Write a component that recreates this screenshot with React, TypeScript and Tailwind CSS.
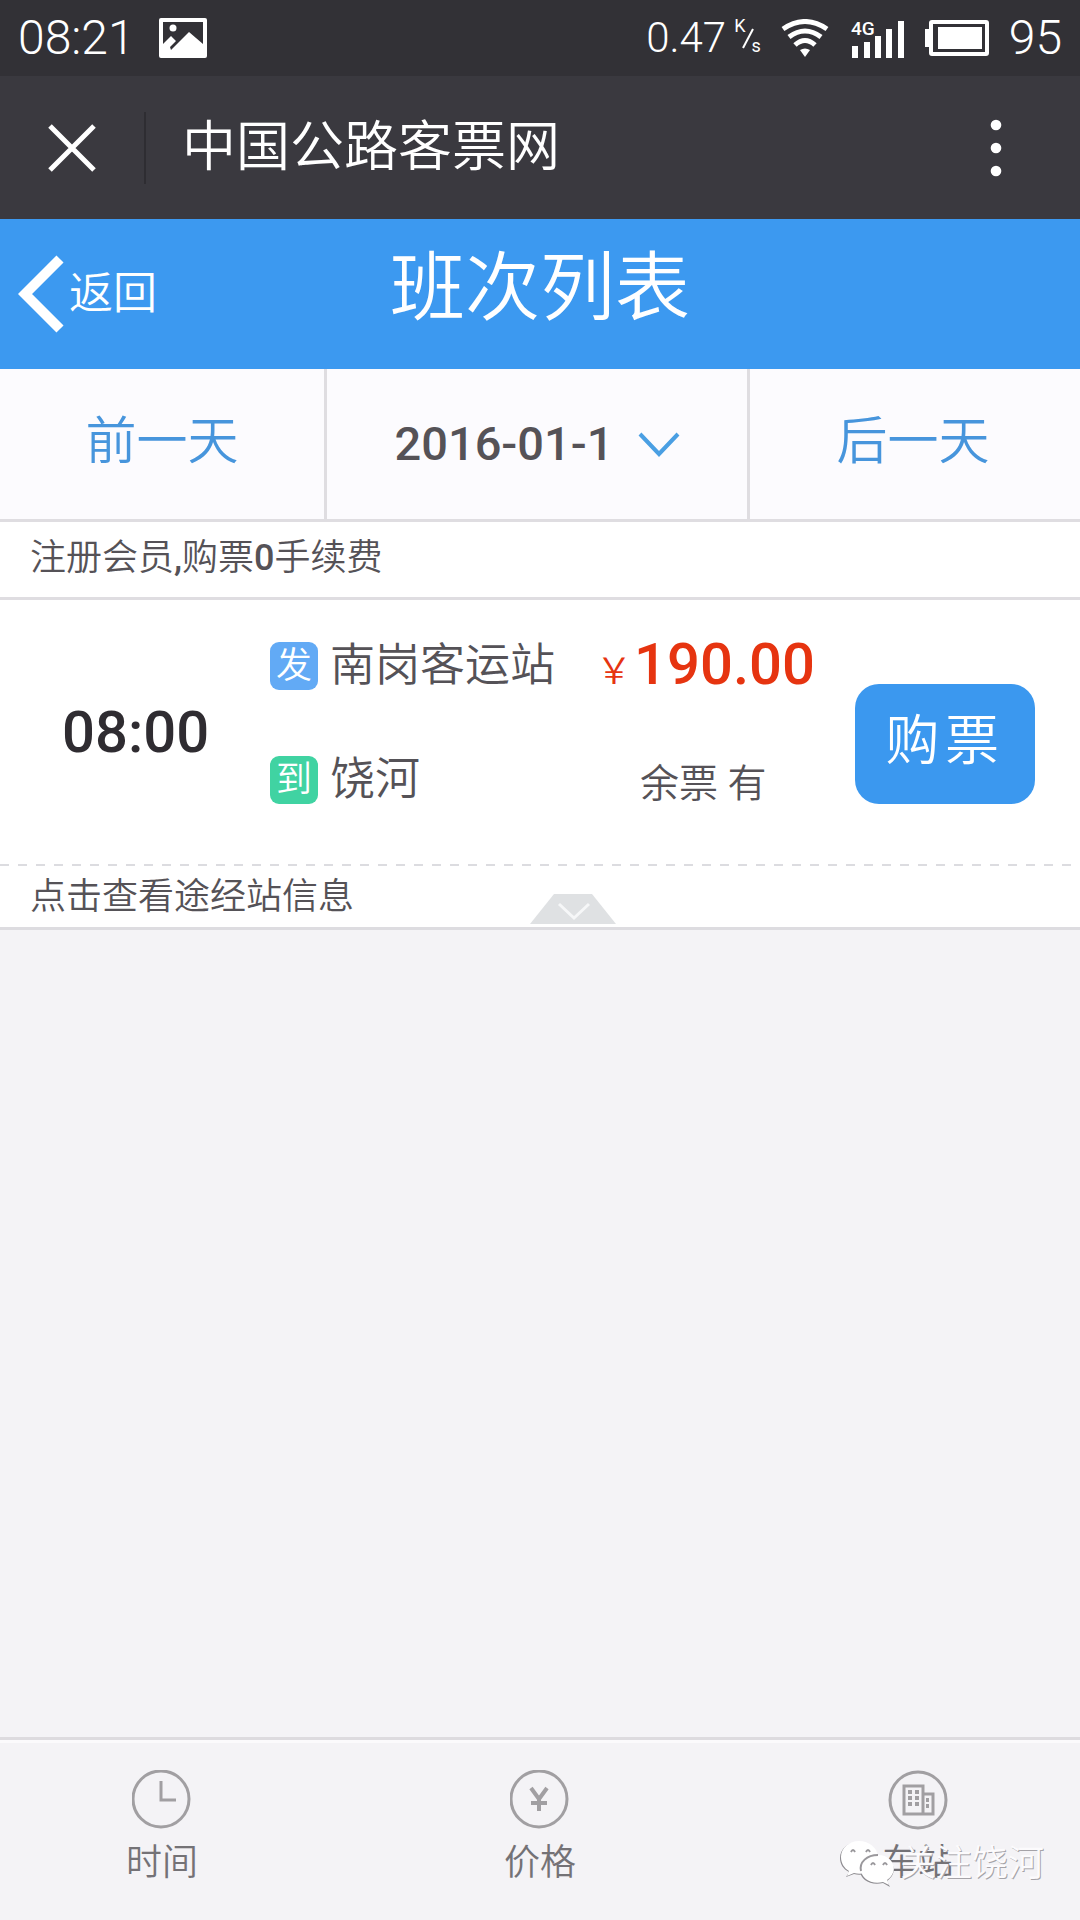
import { useState } from "react";

type ShiftProps = {
  time: string;
  from: string;
  to: string;
  price: string;
  left: string;
};

const dates = ["2016-01-1", "2016-01-2", "2016-01-3"];

const shifts: ShiftProps[] = [
  { time: "08:00", from: "南岗客运站", to: "饶河", price: "190.00", left: "有" },
];

function StatusBar() {
  return (
    <div className="flex h-[76px] items-center justify-between bg-[#323136] px-[18px] font-light text-white">
      <div className="flex items-center gap-6">
        <span className="text-[48px] leading-[60px]">08:21</span>
        <svg width="48" height="40" viewBox="0 0 48 40">
          <path
            fillRule="evenodd"
            fill="#fff"
            d="M2 0H46Q48 0 48 2V38Q48 40 46 40H2Q0 40 0 38V2Q0 0 2 0ZM4 4V26L12 18L17 23L11 29L12 32L30 14L44 26V4Z"
          />
          <circle cx="14" cy="10" r="3.5" fill="#fff" />
        </svg>
      </div>
      <div className="flex items-center">
        <span className="text-[42px] leading-[60px]">0.47</span>
        <span className="ml-2 flex h-[60px] text-[18px] font-normal leading-5">
          <span className="pt-2">K</span>
          <svg className="-mx-1" width="14" height="60" viewBox="0 0 14 60">
            <path d="M2 40L12 21" stroke="#fff" strokeWidth="2" />
          </svg>
          <span className="self-end pb-3">s</span>
        </span>
        <svg className="ml-5" width="48" height="38" viewBox="0 0 48 38">
          <g fill="none" stroke="#fff" strokeWidth="5">
            <path d="M2 10Q24 -5 46 10" />
            <path d="M8 18Q24 6 40 18" />
            <path d="M14 26Q24 17 34 26" />
          </g>
          <path d="M19 31Q24 28 29 31L24 38Z" fill="#fff" />
        </svg>
        <svg className="ml-[22px]" width="54" height="48" viewBox="0 -4 54 48">
          <text x="0" y="17" fill="#fff" fontSize="19" fontWeight="500">
            4G
          </text>
          <path
            fill="#fff"
            d="M1 28h6v12h-6zM13 24h6v16h-6zM24 18h6v22h-6zM35 11h6v29h-6zM47 3h6v37h-6z"
          />
        </svg>
        <svg className="ml-5" width="64" height="36" viewBox="0 0 64 36">
          <path d="M0 9h6v18h-6z" fill="#fff" />
          <rect x="6" y="2" width="56" height="32" rx="1" fill="none" stroke="#fff" strokeWidth="4" />
          <path d="M13 7h44v22h-44z" fill="#fff" />
        </svg>
        <span className="ml-5 text-[48px] leading-[60px]">95</span>
      </div>
    </div>
  );
}

function TitleBar() {
  return (
    <div className="flex h-[143px] items-center bg-[#3a393f] text-white">
      <button type="button" aria-label="关闭" className="flex h-[72px] w-36 items-center justify-center">
        <svg width="48" height="48" viewBox="0 0 48 48">
          <path d="M2 2L46 46M46 2L2 46" stroke="#fff" strokeWidth="5" />
        </svg>
      </button>
      <div className="h-[72px] w-[2px] bg-[#2e2d32]" />
      <span className="ml-9 flex-1 text-[54px] leading-[72px]">中国公路客票网</span>
      <button type="button" aria-label="更多" className="mr-[59px] flex h-[72px] w-[50px] items-center justify-center">
        <svg width="12" height="58" viewBox="0 0 12 58">
          <circle cx="6" cy="6" r="5.3" fill="#fff" />
          <circle cx="6" cy="29" r="5.3" fill="#fff" />
          <circle cx="6" cy="52" r="5.3" fill="#fff" />
        </svg>
      </button>
    </div>
  );
}

function Shift({ time, from, to, price, left }: ShiftProps) {
  return (
    <div className="bg-white">
      <div className="flex h-[264px]">
        <div className="w-[270px] pl-[62px] pt-24 text-[58px] font-medium leading-[72px] text-[#2f2c31]">
          {time}
        </div>
        <div className="flex w-[326px] flex-col gap-[54px] pt-9 text-[45px] leading-[60px] text-[#555257]">
          <div className="flex items-center gap-3">
            <span className="flex size-12 items-center justify-center rounded-[9px] bg-[#62aaf5] text-[36px] leading-12 text-white">
              发
            </span>
            {from}
          </div>
          <div className="flex items-center gap-3">
            <span className="flex size-12 items-center justify-center rounded-[9px] bg-[#40d3a2] text-[36px] leading-12 text-white">
              到
            </span>
            {to}
          </div>
        </div>
        <div className="flex flex-1 flex-col gap-[54px] pt-7">
          <div className="flex items-baseline gap-[2px] text-[#e63410]">
            <span className="text-[36px]">￥</span>
            <span className="text-[58px] font-medium leading-[72px]">{price}</span>
          </div>
          <div className="pl-11 text-[39px] leading-[60px] text-[#555257]">余票 {left}</div>
        </div>
        <button
          type="button"
          className="mr-[45px] mt-[84px] h-[120px] w-[180px] rounded-3xl bg-[#3b98ef] pb-1 text-[54px] leading-[72px] tracking-widest text-white"
        >
          购票
        </button>
      </div>
      <div className="h-[2px] bg-[repeating-linear-gradient(90deg,#dcdce0_0_9px,transparent_9px_18px)]" />
      <button
        type="button"
        className="relative block h-16 w-full border-b-3 border-[#dddce0] pl-[30px] text-left text-[36px] leading-[60px] text-[#555257]"
      >
        点击查看途经站信息
        <svg className="absolute bottom-[3px] left-[530px]" width="86" height="30" viewBox="0 0 86 30">
          <path d="M24 0H62L86 30H0Z" fill="#dfe1e3" />
          <path d="M29 10L44 24L59 10" fill="none" stroke="#f6f7f8" strokeWidth="3" />
        </svg>
      </button>
    </div>
  );
}

function TimeIcon() {
  return (
    <svg width="60" height="60" viewBox="0 0 60 60" fill="none" stroke="#a19fa2" strokeWidth="3">
      <circle cx="29" cy="29" r="28" />
      <path d="M29 11V30H44" />
    </svg>
  );
}

function PriceIcon() {
  return (
    <svg width="60" height="60" viewBox="0 0 60 60" fill="none" stroke="#a19fa2" strokeWidth="3">
      <circle cx="29" cy="29" r="28" />
      <path d="M21 18L29 29L37 18M29 29V41M21 33H37" strokeWidth="4" />
    </svg>
  );
}

function StationIcon() {
  return (
    <svg width="60" height="60" viewBox="0 0 60 60" fill="none" stroke="#a19fa2" strokeWidth="3">
      <circle cx="30" cy="30" r="28" />
      <path d="M16 16H35V44H16ZM35 24H45V44H35Z" />
      <path
        stroke="none"
        fill="#a19fa2"
        d="M20 20h4v4h-4zM27 20h4v4h-4zM20 26h4v4h-4zM27 26h4v4h-4zM20 32h4v4h-4zM27 32h4v4h-4zM38 28h3v4h-3zM38 34h3v4h-3z"
      />
    </svg>
  );
}

const tabs = [
  { label: "时间", icon: <TimeIcon /> },
  { label: "价格", icon: <PriceIcon /> },
  { label: "车站", icon: <StationIcon /> },
];

function Watermark() {
  return (
    <div className="pointer-events-none absolute bottom-8 right-9 flex items-center gap-1">
      <svg width="56" height="48" viewBox="0 0 56 48">
        <g fill="#8d8b90">
          <path d="M18 2C8 2 0 9 0 18C0 24 3 29 9 32L6 37L14 34C25 37 38 30 38 18C38 9 28 2 18 2Z" />
          <path d="M37 16C28 16 20 22 20 30C20 40 31 46 43 43L50 47L47 41C60 32 53 16 37 16Z" />
        </g>
        <path d="M19 1C9 1 1 8 1 17C1 23 4 28 9 31L7 36L14 33C25 36 38 29 38 17C38 8 29 1 19 1Z" fill="#fff" />
        <path d="M38 15C29 15 21 21 21 29C21 39 32 45 43 42L49 45L47 40C60 31 53 15 38 15Z" fill="#fff" />
        <path
          d="M21 31C19 22 27 15 38 15M11 12q2-4 4 0M26 12q2-4 4 0M31 25q2-4 4 0M43 25q2-4 4 0"
          fill="none"
          stroke="#9a989c"
          strokeWidth="2"
        />
      </svg>
      <span className="text-[36px] leading-[48px] text-[#fcfbfd] [text-shadow:1px_1px_0_#a5a3a8]">
        关注饶河
      </span>
    </div>
  );
}

export default function App() {
  const [date, setDate] = useState(dates[0]);

  return (
    <div className="flex min-h-screen flex-col bg-[#f4f3f6] font-[Roboto,'Noto_Sans_CJK_SC',sans-serif] font-[350]">
      <StatusBar />
      <TitleBar />
      <header className="grid h-[150px] grid-cols-[1fr_auto_1fr] items-center bg-[#3c99f0] text-white">
        <a href="#" className="flex items-center gap-1 pl-[18px] text-[44px] leading-[60px]">
          <svg width="47" height="78" viewBox="0 0 47 78">
            <path d="M42 4L7 39L42 74" fill="none" stroke="#fff" strokeWidth="10" />
          </svg>
          返回
        </a>
        <h1 className="pb-3 text-[75px] font-[350] leading-[90px]">班次列表</h1>
      </header>
      <div className="grid h-[153px] grid-cols-[327fr_423fr_330fr] border-b-3 border-[#dfdde1] bg-[#fcfbfe] text-[51px] leading-[72px] text-[#4795dc]">
        <button type="button" className="border-r-3 border-[#dfdde1] pb-1">
          前一天
        </button>
        <div className="flex items-center justify-center gap-6 border-r-3 border-[#dfdde1]">
          <select
            aria-label="日期"
            className="appearance-none text-[47px] font-medium leading-[72px] text-[#555257]"
            value={date}
            onChange={(e) => setDate(e.target.value)}
          >
            {dates.map((d) => (
              <option key={d}>{d}</option>
            ))}
          </select>
          <svg width="42" height="26" viewBox="0 0 42 26">
            <path d="M2 3L21 23L40 3" fill="none" stroke="#4a9fe3" strokeWidth="4" />
          </svg>
        </div>
        <button type="button" className="pb-1 pr-1">
          后一天
        </button>
      </div>
      <p className="h-[78px] border-b-3 border-[#dfdde1] bg-white pl-[30px] text-[36px] leading-[72px] text-[#555257]">
        注册会员<span className="font-medium">,</span>购票<span className="font-medium">0</span>手续费
      </p>
      <main className="flex-1">
        {shifts.map((shift) => (
          <Shift key={shift.time} {...shift} />
        ))}
      </main>
      <nav className="relative flex h-[183px] justify-between border-t-3 border-[#dddbdf] px-[126px] pt-[30px] shadow-[inset_0_3px_#fbfafc]">
        {tabs.map((tab) => (
          <a
            key={tab.label}
            href="#"
            className="flex flex-col items-center gap-[6px] text-[36px] leading-[54px] text-[#747276]"
          >
            {tab.icon}
            {tab.label}
          </a>
        ))}
        <Watermark />
      </nav>
    </div>
  );
}
